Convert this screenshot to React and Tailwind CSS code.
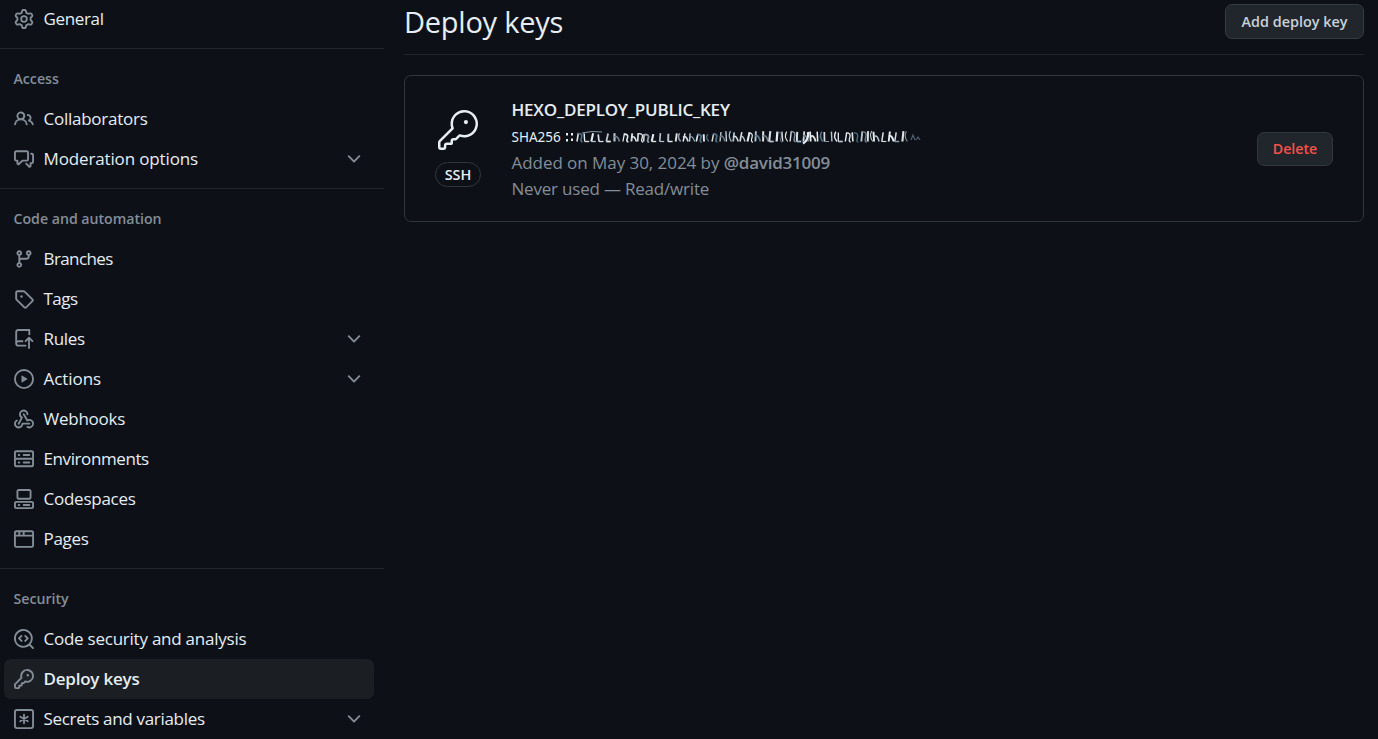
import React from 'react';
import { GoKey } from 'react-icons/go';

const icons = {
  gear: 'M8 0a8.2 8.2 0 0 1 .701.031C9.444.095 9.99.645 10.16 1.29l.288 1.107c.018.066.079.158.212.224.231.114.454.243.668.386.123.082.233.09.299.071l1.103-.303c.644-.176 1.392.021 1.82.63.27.385.506.792.704 1.218.315.675.111 1.422-.364 1.891l-.814.806c-.049.048-.098.147-.088.294.016.257.016.515 0 .772-.01.147.038.246.088.294l.814.806c.475.469.679 1.216.364 1.891a7.977 7.977 0 0 1-.704 1.217c-.428.61-1.176.807-1.82.63l-1.102-.302c-.067-.019-.177-.011-.3.071a5.909 5.909 0 0 1-.668.386c-.133.066-.194.158-.211.224l-.29 1.106c-.168.646-.715 1.196-1.458 1.26a8.006 8.006 0 0 1-1.402 0c-.743-.064-1.289-.614-1.458-1.26l-.289-1.106c-.018-.066-.079-.158-.212-.224a5.738 5.738 0 0 1-.668-.386c-.123-.082-.233-.09-.299-.071l-1.103.303c-.644.176-1.392-.021-1.82-.63a8.12 8.12 0 0 1-.704-1.218c-.315-.675-.111-1.422.363-1.891l.815-.806c.05-.048.098-.147.088-.294a6.214 6.214 0 0 1 0-.772c.01-.147-.038-.246-.088-.294l-.815-.806C.635 6.045.431 5.298.746 4.623a7.92 7.92 0 0 1 .704-1.217c.428-.61 1.176-.807 1.82-.63l1.102.302c.067.019.177.011.3-.071.214-.143.437-.272.668-.386.133-.066.194-.158.211-.224l.29-1.106C6.009.645 6.556.095 7.299.03 7.53.01 7.764 0 8 0Zm-.571 1.525c-.036.003-.108.036-.137.146l-.289 1.105c-.147.561-.549.967-.998 1.189-.173.086-.34.183-.5.29-.417.278-.97.423-1.529.27l-1.103-.303c-.109-.03-.175.016-.195.045-.22.312-.412.644-.573.99-.014.031-.021.11.059.19l.815.806c.411.406.562.957.53 1.456a4.709 4.709 0 0 0 0 .582c.032.499-.119 1.05-.53 1.456l-.815.806c-.081.08-.073.159-.059.19.162.346.353.677.573.989.02.03.085.076.195.046l1.102-.303c.56-.153 1.113-.008 1.53.27.161.107.328.204.501.29.447.222.85.629.997 1.189l.289 1.105c.029.109.101.143.137.146a6.6 6.6 0 0 0 1.142 0c.036-.003.108-.036.137-.146l.289-1.105c.147-.561.549-.967.998-1.189.173-.086.34-.183.5-.29.417-.278.97-.423 1.529-.27l1.103.303c.109.029.175-.016.195-.045.22-.313.411-.644.573-.99.014-.031.021-.11-.059-.19l-.815-.806c-.411-.406-.562-.957-.53-1.456a4.709 4.709 0 0 0 0-.582c-.032-.499.119-1.05.53-1.456l.815-.806c.081-.08.073-.159.059-.19a6.464 6.464 0 0 0-.573-.989c-.02-.03-.085-.076-.195-.046l-1.102.303c-.56.153-1.113.008-1.53-.27a4.44 4.44 0 0 0-.501-.29c-.447-.222-.85-.629-.997-1.189l-.289-1.105c-.029-.11-.101-.143-.137-.146a6.6 6.6 0 0 0-1.142 0ZM11 8a3 3 0 1 1-6 0 3 3 0 0 1 6 0ZM9.5 8a1.5 1.5 0 1 0-3.001.001A1.5 1.5 0 0 0 9.5 8Z',
  people: 'M2 5.5a3.5 3.5 0 1 1 5.898 2.549 5.508 5.508 0 0 1 3.034 4.084.75.75 0 1 1-1.482.235 4 4 0 0 0-7.9 0 .75.75 0 0 1-1.482-.236A5.507 5.507 0 0 1 3.102 8.05 3.493 3.493 0 0 1 2 5.5ZM11 4a3.001 3.001 0 0 1 2.22 5.018 5.01 5.01 0 0 1 2.56 3.012.749.749 0 0 1-.885.954.752.752 0 0 1-.549-.514 3.507 3.507 0 0 0-2.522-2.372.75.75 0 0 1-.574-.73v-.352a.75.75 0 0 1 .416-.672A1.5 1.5 0 0 0 11 5.5.75.75 0 0 1 11 4Zm-5.5-.5a2 2 0 1 0-.001 3.999A2 2 0 0 0 5.5 3.5Z',
  discussion: 'M1.75 1h8.5c.966 0 1.75.784 1.75 1.75v5.5A1.75 1.75 0 0 1 10.25 10H7.061l-2.574 2.573A1.458 1.458 0 0 1 2 11.543V10h-.25A1.75 1.75 0 0 1 0 8.25v-5.5C0 1.784.784 1 1.75 1ZM1.5 2.75v5.5c0 .138.112.25.25.25h1a.75.75 0 0 1 .75.75v2.19l2.72-2.72a.749.749 0 0 1 .53-.22h3.5a.25.25 0 0 0 .25-.25v-5.5a.25.25 0 0 0-.25-.25h-8.5a.25.25 0 0 0-.25.25Zm13 2a.25.25 0 0 0-.25-.25h-.5a.75.75 0 0 1 0-1.5h.5c.966 0 1.75.784 1.75 1.75v5.5A1.75 1.75 0 0 1 14.25 12H14v1.543a1.458 1.458 0 0 1-2.487 1.03L9.22 12.28a.749.749 0 0 1 .326-1.275.749.749 0 0 1 .734.215l2.22 2.22v-2.19a.75.75 0 0 1 .75-.75h1a.25.25 0 0 0 .25-.25Z',
  branch: 'M9.5 3.25a2.25 2.25 0 1 1 3 2.122V6A2.5 2.5 0 0 1 10 8.5H6a1 1 0 0 0-1 1v1.128a2.251 2.251 0 1 1-1.5 0V5.372a2.25 2.25 0 1 1 1.5 0v1.836A2.493 2.493 0 0 1 6 7h4a1 1 0 0 0 1-1v-.628A2.25 2.25 0 0 1 9.5 3.25Zm-6 0a.75.75 0 1 0 1.5 0 .75.75 0 0 0-1.5 0Zm8.25-.75a.75.75 0 1 0 0 1.5.75.75 0 0 0 0-1.5ZM4.25 12a.75.75 0 1 0 0 1.5.75.75 0 0 0 0-1.5Z',
  tag: 'M1 7.775V2.75C1 1.784 1.784 1 2.75 1h5.025c.464 0 .91.184 1.238.513l6.25 6.25a1.75 1.75 0 0 1 0 2.474l-5.026 5.026a1.75 1.75 0 0 1-2.474 0l-6.25-6.25A1.752 1.752 0 0 1 1 7.775Zm1.5 0c0 .066.026.13.073.177l6.25 6.25a.25.25 0 0 0 .354 0l5.025-5.025a.25.25 0 0 0 0-.354l-6.25-6.25a.25.25 0 0 0-.177-.073H2.75a.25.25 0 0 0-.25.25ZM6 5a1 1 0 1 1 0 2 1 1 0 0 1 0-2Z',
  push: 'M1 2.5A2.5 2.5 0 0 1 3.5 0h8.75a.75.75 0 0 1 .75.75v3.5a.75.75 0 0 1-1.5 0V1.5h-8a1 1 0 0 0-1 1v6.708A2.493 2.493 0 0 1 3.5 9h3.25a.75.75 0 0 1 0 1.5H3.5a1 1 0 0 0 0 2h5.75a.75.75 0 0 1 0 1.5H3.5A2.5 2.5 0 0 1 1 11.5ZM14.23 10.29L12.75 8.81v6.44a.75.75 0 0 1-1.5 0V8.81L9.77 10.29a.75.75 0 0 1-1.06-1.06l2.76-2.76a.75.75 0 0 1 1.06 0l2.76 2.76a.75.75 0 0 1-1.06 1.06Z',
  play: 'M8 0a8 8 0 1 1 0 16A8 8 0 0 1 8 0ZM1.5 8a6.5 6.5 0 1 0 13 0 6.5 6.5 0 0 0-13 0Zm4.879-2.773 4.264 2.559a.25.25 0 0 1 0 .428l-4.264 2.559A.25.25 0 0 1 6 10.559V5.442a.25.25 0 0 1 .379-.215Z',
  webhook: 'M5.5 4.25a2.25 2.25 0 0 1 4.5 0 .75.75 0 0 0 1.5 0 3.75 3.75 0 1 0-6.14 2.889l-2.272 4.258a.75.75 0 0 0 1.324.706L7 7.25a.75.75 0 0 0-.309-1.015A2.25 2.25 0 0 1 5.5 4.25ZM7.364 3.607a.75.75 0 0 1 1.03.257l2.608 4.349a3.75 3.75 0 1 1-.628 6.785.75.75 0 0 1 .752-1.299 2.25 2.25 0 1 0-.033-3.88.75.75 0 0 1-1.03-.256L7.107 4.636a.75.75 0 0 1 .257-1.03ZM2.9 8.776A.75.75 0 0 1 2.625 9.8 2.25 2.25 0 1 0 6 11.75a.75.75 0 0 1 .75-.751h5.5a.75.75 0 0 1 0 1.5H7.425a3.751 3.751 0 1 1-5.55-3.998.75.75 0 0 1 1.024.274Z',
  server: 'M1.75 1h12.5c.966 0 1.75.784 1.75 1.75v4c0 .372-.116.717-.314 1 .198.283.314.628.314 1v4a1.75 1.75 0 0 1-1.75 1.75H1.75A1.75 1.75 0 0 1 0 12.75v-4c0-.358.109-.707.314-1a1.739 1.739 0 0 1-.314-1v-4C0 1.784.784 1 1.75 1ZM1.5 2.75v4c0 .138.112.25.25.25h12.5a.25.25 0 0 0 .25-.25v-4a.25.25 0 0 0-.25-.25H1.75a.25.25 0 0 0-.25.25Zm.25 5.75a.25.25 0 0 0-.25.25v4c0 .138.112.25.25.25h12.5a.25.25 0 0 0 .25-.25v-4a.25.25 0 0 0-.25-.25ZM7 4.75A.75.75 0 0 1 7.75 4h4.5a.75.75 0 0 1 0 1.5h-4.5A.75.75 0 0 1 7 4.75ZM7.75 10h4.5a.75.75 0 0 1 0 1.5h-4.5a.75.75 0 0 1 0-1.5ZM3 4.75A.75.75 0 0 1 3.75 4h.5a.75.75 0 0 1 0 1.5h-.5A.75.75 0 0 1 3 4.75ZM3.75 10h.5a.75.75 0 0 1 0 1.5h-.5a.75.75 0 0 1 0-1.5Z',
  codespaces: 'M0 11.25c0-.966.784-1.75 1.75-1.75h12.5c.966 0 1.75.784 1.75 1.75v3A1.75 1.75 0 0 1 14.25 16H1.75A1.75 1.75 0 0 1 0 14.25Zm2-9.5C2 .784 2.784 0 3.75 0h8.5C13.216 0 14 .784 14 1.75v5a1.75 1.75 0 0 1-1.75 1.75h-8.5A1.75 1.75 0 0 1 2 6.75Zm1.75-.25a.25.25 0 0 0-.25.25v5c0 .138.112.25.25.25h8.5a.25.25 0 0 0 .25-.25v-5a.25.25 0 0 0-.25-.25Zm-2 9.5a.25.25 0 0 0-.25.25v3c0 .138.112.25.25.25h12.5a.25.25 0 0 0 .25-.25v-3a.25.25 0 0 0-.25-.25ZM7 12.75a.75.75 0 0 1 .75-.75h4.5a.75.75 0 0 1 0 1.5h-4.5a.75.75 0 0 1-.75-.75Zm-4 0a.75.75 0 0 1 .75-.75h.5a.75.75 0 0 1 0 1.5h-.5a.75.75 0 0 1-.75-.75Z',
  browser: 'M0 2.75C0 1.784.784 1 1.75 1h12.5c.966 0 1.75.784 1.75 1.75v10.5A1.75 1.75 0 0 1 14.25 15H1.75A1.75 1.75 0 0 1 0 13.25ZM14.5 6h-13v7.25c0 .138.112.25.25.25h12.5a.25.25 0 0 0 .25-.25Zm-6-3.5v2h6V2.75a.25.25 0 0 0-.25-.25ZM5 2.5v2h2v-2Zm-3.25 0a.25.25 0 0 0-.25.25V4.5h2v-2Z',
  codescan: 'M8.47 4.97a.75.75 0 0 0 0 1.06L9.94 7.5 8.47 8.97a.75.75 0 1 0 1.06 1.06l2-2a.75.75 0 0 0 0-1.06l-2-2a.75.75 0 0 0-1.06 0ZM6.53 6.03a.75.75 0 0 0-1.06-1.06l-2 2a.75.75 0 0 0 0 1.06l2 2a.75.75 0 1 0 1.06-1.06L5.06 7.5ZM12.246 13.307a7.501 7.501 0 1 1 1.06-1.06l2.474 2.473a.749.749 0 0 1-.326 1.275.749.749 0 0 1-.734-.215ZM1.5 7.5a6.002 6.002 0 0 0 3.608 5.504 6.002 6.002 0 0 0 6.486-1.117.748.748 0 0 1 .292-.293A6 6 0 1 0 1.5 7.5Z',
  key: 'M10.5 0a5.499 5.499 0 1 1-1.288 10.848l-.932.932a.749.749 0 0 1-.53.22H7v.75a.749.749 0 0 1-.22.53l-.5.5a.749.749 0 0 1-.53.22H5v.75a.749.749 0 0 1-.22.53l-.5.5a.749.749 0 0 1-.53.22h-2A1.75 1.75 0 0 1 0 14.25v-2c0-.199.079-.389.22-.53l4.932-4.932A5.5 5.5 0 0 1 10.5 0Zm-4 5.5c-.001.431.069.86.205 1.269a.75.75 0 0 1-.181.768L1.5 12.56v1.69c0 .138.112.25.25.25h1.69l.06-.06v-1.19a.75.75 0 0 1 .75-.75h1.19l.06-.06v-1.19a.75.75 0 0 1 .75-.75h1.19l1.023-1.025a.75.75 0 0 1 .768-.18A4 4 0 1 0 6.5 5.5ZM11 6a1 1 0 1 1 0-2 1 1 0 0 1 0 2Z',
  chevron: 'M12.78 5.22a.749.749 0 0 1 0 1.06l-4.25 4.25a.749.749 0 0 1-1.06 0L3.22 6.28a.749.749 0 1 1 1.06-1.06L8 8.939l3.72-3.719a.749.749 0 0 1 1.06 0Z',
};

function Icon({ name }) {
  if (name === 'asterisk') {
    return (
      <svg viewBox="0 0 16 16" className="size-5 shrink-0 text-[#848d97]" fill="none" stroke="currentColor" strokeWidth="1.5">
        <rect x="0.75" y="0.75" width="14.5" height="14.5" rx="1.6" />
        <path d="M8 4.6v6.8M5 6.25l6 3.5M11 6.25 5 9.75" strokeLinecap="round" />
      </svg>
    );
  }
  return (
    <svg viewBox="0 0 16 16" className="size-5 shrink-0 text-[#848d97]" fill="currentColor">
      <path d={icons[name]} />
    </svg>
  );
}

const sections = [
  {
    title: 'Access',
    items: [
      { icon: 'people', label: 'Collaborators', track: 'tracking-[-0.25px]' },
      { icon: 'discussion', label: 'Moderation options', track: 'tracking-[-0.14px]', more: true },
    ],
  },
  {
    title: 'Code and automation',
    items: [
      { icon: 'branch', label: 'Branches', track: 'tracking-[-0.6px]' },
      { icon: 'tag', label: 'Tags', track: 'tracking-[-0.5px]' },
      { icon: 'push', label: 'Rules', track: 'tracking-[-0.3px]', more: true },
      { icon: 'play', label: 'Actions', track: 'tracking-[-0.05px]', more: true },
      { icon: 'webhook', label: 'Webhooks', track: 'tracking-[-0.25px]' },
      { icon: 'server', label: 'Environments', track: 'tracking-[-0.4px]' },
      { icon: 'codespaces', label: 'Codespaces', track: 'tracking-[-0.25px]' },
      { icon: 'browser', label: 'Pages', track: 'tracking-[-0.3px]' },
    ],
  },
  {
    title: 'Security',
    items: [
      { icon: 'codescan', label: 'Code security and analysis', track: 'tracking-[-0.24px]' },
      { icon: 'key', label: 'Deploy keys', track: 'tracking-[-0.22px]', active: true },
      { icon: 'asterisk', label: 'Secrets and variables', track: 'tracking-[-0.31px]', more: true },
    ],
  },
];

function NavItem({ icon, label, track, more, active }) {
  return (
    <a className={`ml-1 mr-2.5 flex h-10 items-center rounded-[7px] pl-2.5 pr-2.5 ${active ? 'bg-[#1b1f24] font-semibold' : ''}`}>
      <Icon name={icon} />
      <span className={`ml-[9.5px] flex-1 whitespace-nowrap text-[17px] leading-6 ${track}`}>{label}</span>
      {more && <Icon name="chevron" />}
    </a>
  );
}

// Smudged fingerprint: clusters of strokes on a fixed pseudo-random sequence.
const smudge = (() => {
  let seed = 29;
  const rnd = () => {
    seed = (seed * 16807) % 2147483647;
    return seed / 2147483647;
  };
  const f = (n) => n.toFixed(1);
  const bright = ['#e6edf3', '#d5dde3', '#b9c6d0', '#dfe3dc'];
  const dim = ['#8796a5', '#4f6f8a', '#9fbdd4', '#6b7785'];
  const out = [];
  let x = 12;
  while (x < 340) {
    const top = (x > 150 ? 3 : 5) + rnd() * 1.5;
    const h = 13.5 - top;
    const lean = rnd() * 3 - 1;
    out.push({ d: `M${f(x + lean)} ${f(top)}L${f(x)} ${f(top + h)}`, color: bright[Math.floor(rnd() * 4)], width: f(1.3 + rnd() * 0.9) });
    const kind = Math.floor(rnd() * 4);
    const shapes = [
      `M${f(x)} ${f(top + h)}h4.5`,
      `M${f(x + 1)} ${f(top + 0.5)}q5 0 3.5 ${f(h / 2)}t1 ${f(h / 2)}`,
      `M${f(x)} ${f(top + h / 2)}q3 -2.5 5 ${f(h / 2)}`,
      `M${f(x + 4)} ${f(top)}q-3 ${f(h / 2)} 1 ${f(h)}`,
    ];
    out.push({ d: shapes[kind], color: (rnd() > 0.45 ? bright : dim)[Math.floor(rnd() * 4)], width: f(1 + rnd() * 0.9) });
    x += 6 + rnd() * 2.5;
  }
  return out;
})();

function SmudgedFingerprint() {
  return (
    <svg width="358" height="18" viewBox="0 0 358 18" className="shrink-0" fill="none">
      <path d="M2 5v2.4M2 11v2.4M7 5v2.4M7 10.5v2.4" stroke="#e6edf3" strokeWidth="2" />
      {smudge.map((s, i) => (
        <path key={i} d={s.d} stroke={s.color} strokeWidth={s.width} />
      ))}
      <path d="M17 5q10 -2.5 20 -1" stroke="#8796a5" strokeWidth="1" />
      <path d="M243 4q1 8 -5 11.5" stroke="#e6edf3" strokeWidth="2.2" />
      <path d="M346 12l2 -5 2 5M351 12l2 -3 2 3" stroke="#4f6072" strokeWidth="1.2" />
    </svg>
  );
}

export default function App() {
  return (
    <div className="flex h-[739px] w-[1378px] overflow-hidden bg-[#0d1117] font-['Open_Sans',sans-serif] text-[#e6edf3]">
      <nav className="w-[384px] shrink-0">
        <div className="-mt-px mb-[9px]">
          <NavItem icon="gear" label="General" track="tracking-[-0.35px]" />
        </div>
        {sections.map((s) => (
          <section key={s.title} className="mb-[9px] border-t border-[#21262d]">
            <h3 className="flex h-[50px] items-center pl-[13.5px] pt-[9px] text-[14.2px] font-semibold tracking-[-0.03px] text-[#848d97]">
              <span>{s.title}</span>
            </h3>
            {s.items.map((i) => (
              <NavItem key={i.label} {...i} />
            ))}
          </section>
        ))}
      </nav>

      <main className="ml-5 w-[960px]">
        <header className="flex h-[55px] items-start justify-between border-b border-[#21262d]">
          <h2 className="mt-[3px] whitespace-nowrap text-[29px] leading-[38px] tracking-[-0.25px]">Deploy keys</h2>
          <button className="mt-1 flex h-[35px] w-[139px] items-center justify-center whitespace-nowrap rounded-[7px] border border-[#363b42] bg-[#21262d] text-[14.4px] font-semibold text-[#c9d1d9]">
            Add deploy key
          </button>
        </header>

        <div className="mt-5 flex h-[147px] items-center rounded-[7px] border border-[#30363d] pl-[30px] pr-[30px]">
          <div className="flex w-[46px] flex-col items-center">
            <GoKey className="size-10" />
            <span className="mt-3 flex h-[25px] w-[46px] items-center justify-center rounded-full border border-[#30363d] text-[14.4px] font-semibold">SSH</span>
          </div>
          <div className="ml-[30.5px] flex-1 whitespace-nowrap pt-0.5 text-[17px] text-[#848d97]">
            <div className="h-[27px] font-semibold leading-[26px] tracking-[-0.21px] text-[#e6edf3]">HEXO_DEPLOY_PUBLIC_KEY</div>
            <div className="flex h-[26px] items-center text-[13.5px] text-[#e6edf3]">
              <code className="w-[53px] font-['Noto_Sans',sans-serif]">SHA256</code>
              <SmudgedFingerprint />
            </div>
            <div className="leading-[26px]">
              <span className="tracking-[-0.05px]">Added on May 30, 2024 by </span>
              <span className="font-semibold tracking-[-0.22px]">@david31009</span>
            </div>
            <div className="leading-[26px] tracking-[-0.2px]">Never used — Read/write</div>
          </div>
          <button className="flex h-[34px] w-[76px] items-center justify-center rounded-[7px] border border-[#30363d] bg-[#21262d] text-[14.2px] font-semibold text-[#f85149]">
            Delete
          </button>
        </div>
      </main>
    </div>
  );
}
